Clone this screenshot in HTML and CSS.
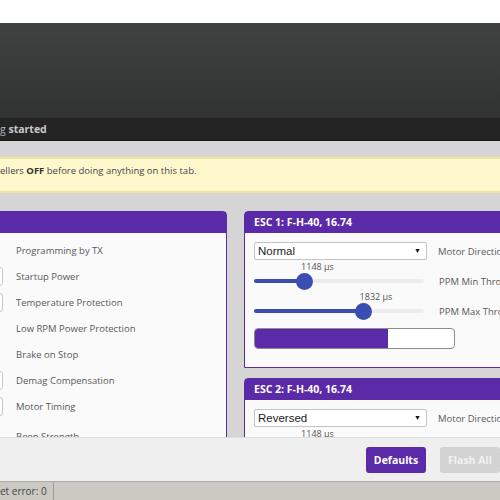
FILE: index.html
```html
<!DOCTYPE html>
<html>
<head>
    <title>ESC Setup</title>
    <link rel="stylesheet" href="styles.css">
</head>
<body>
    <div class="app">
        <div class="topspace"></div>
        <div class="header"></div>
        <div class="log">g <b>started</b></div>

        <div class="content">
            <div class="note">ellers <b>OFF</b> before doing anything on this tab.</div>

            <div class="columns">
                <div class="panel common">
                    <div class="panel-head"></div>
                    <div class="panel-body">
                        <div class="row"><span class="field none"></span><span class="label">Programming by TX</span></div>
                        <div class="row"><span class="field"></span><span class="label">Startup Power</span></div>
                        <div class="row"><span class="field"></span><span class="label">Temperature Protection</span></div>
                        <div class="row"><span class="field none"></span><span class="label">Low RPM Power Protection</span></div>
                        <div class="row"><span class="field none"></span><span class="label">Brake on Stop</span></div>
                        <div class="row"><span class="field"></span><span class="label">Demag Compensation</span></div>
                        <div class="row"><span class="field"></span><span class="label">Motor Timing</span></div>
                        <div class="row spaced"><span class="field none"></span><span class="label">Beep Strength</span></div>
                    </div>
                </div>

                <div class="escs">
                    <div class="panel esc">
                        <div class="panel-head">ESC 1: F-H-40, 16.74</div>
                        <div class="panel-body">
                            <div class="line">
                                <div class="select">Normal<span class="arrow">&#9660;</span></div>
                                <span class="label">Motor Direction</span>
                            </div>
                            <div class="line slider-line">
                                <div class="slider">
                                    <div class="value" style="width: 127px">1148 µs</div>
                                    <div class="track">
                                        <div class="fill" style="width: 50px"></div>
                                        <div class="thumb"></div>
                                    </div>
                                </div>
                                <span class="label">PPM Min Throttle</span>
                            </div>
                            <div class="line slider-line">
                                <div class="slider">
                                    <div class="value" style="width: 244px">1832 µs</div>
                                    <div class="track">
                                        <div class="fill" style="width: 109px"></div>
                                        <div class="thumb"></div>
                                    </div>
                                </div>
                                <span class="label">PPM Max Throttle</span>
                            </div>
                            <div class="progress"><div class="progress-fill" style="width: 133px"></div></div>
                        </div>
                    </div>

                    <div class="panel esc">
                        <div class="panel-head">ESC 2: F-H-40, 16.74</div>
                        <div class="panel-body">
                            <div class="line">
                                <div class="select">Reversed<span class="arrow">&#9660;</span></div>
                                <span class="label">Motor Direction</span>
                            </div>
                            <div class="line slider-line">
                                <div class="slider">
                                    <div class="value" style="width: 127px">1148 µs</div>
                                    <div class="track">
                                        <div class="fill" style="width: 50px"></div>
                                        <div class="thumb"></div>
                                    </div>
                                </div>
                                <span class="label">PPM Min Throttle</span>
                            </div>
                        </div>
                    </div>
                </div>
            </div>
        </div>

        <div class="toolbar">
            <a class="btn">Defaults</a>
            <a class="btn disabled">Flash All</a>
        </div>
        <div class="status">
            <span class="status-item">et error: 0</span>
        </div>
    </div>
</body>
</html>
```

FILE: styles.css
```css
body {
    margin: 0;
    font-family: "Open Sans", "DejaVu Sans", sans-serif;
    font-size: 9.5px;
    color: #555;
    background: #fff;
}
.app {
    width: 500px;
    height: 500px;
    overflow: hidden;
    display: flex;
    flex-direction: column;
}
.topspace {
    height: 23px;
    flex: none;
}
.header {
    height: 95px;
    flex: none;
    background: linear-gradient(#3f4241, #313332);
}
.log {
    height: 23px;
    flex: none;
    line-height: 23px;
    background: #242424;
    color: #b4b4b4;
    font-size: 10.5px;
    border-bottom: 1px solid #1b1b1b;
    box-sizing: border-box;
}
.log b {
    color: #c8c8c8;
}
.content {
    height: 296px;
    flex: none;
    overflow: hidden;
    background: #d5d5d5;
    padding-top: 16px;
    box-sizing: border-box;
}
.note {
    height: 36px;
    box-sizing: border-box;
    padding-top: 5px;
    background: #fff8cd;
    border-top: 2px solid #f2e3a2;
    border-bottom: 2px solid #f2e3a2;
    color: #474747;
}
.note b {
    color: #333;
}
.columns {
    display: flex;
    gap: 17px;
    margin-top: 18px;
    margin-left: -60px;
}
.panel {
    border: 1px solid #5b2aa8;
    border-radius: 4px 4px 0 0;
    background: #fafafa;
    flex: none;
}
.panel-head {
    height: 21px;
    line-height: 20px;
    background: #5b2aa8;
    color: #fff;
    font-weight: bold;
    font-size: 10.5px;
    padding-left: 9px;
}
.common {
    width: 285px;
}
.common .panel-body {
    padding-top: 4px;
}
.row {
    display: flex;
    align-items: center;
    height: 26px;
    padding-left: 10px;
    gap: 13px;
}
.row.spaced {
    margin-top: 4px;
}
.field {
    width: 52px;
    height: 19px;
    box-sizing: border-box;
    border: 1px solid #c8c8c8;
    border-radius: 3px;
    background: #fff;
}
.field.none {
    border: none;
    background: none;
}
.row .label {
    color: #595959;
}
.escs {
    display: flex;
    flex-direction: column;
    gap: 10px;
    width: 290px;
    flex: none;
}
.esc .panel-body {
    padding: 9px 9px 18px 9px;
}
.line {
    display: flex;
    align-items: center;
    gap: 11px;
}
.line .label {
    white-space: nowrap;
    color: #595959;
}
.select {
    width: 173px;
    height: 18px;
    box-sizing: border-box;
    border: 1px solid #c4c4c4;
    border-radius: 2px;
    background: #fff;
    font-family: "Liberation Sans", Arial, sans-serif;
    font-size: 11.5px;
    color: #222;
    line-height: 16px;
    padding-left: 3px;
    display: flex;
    justify-content: space-between;
}
.arrow {
    font-size: 7px;
    color: #111;
    padding-right: 5px;
}
.slider-line {
    align-items: flex-end;
    gap: 15px;
}
.slider {
    width: 170px;
    height: 30px;
    display: flex;
    flex-direction: column;
}
.value {
    height: 13px;
    line-height: 13px;
    text-align: center;
    font-size: 9px;
    color: #555;
    white-space: nowrap;
}
.track {
    height: 4px;
    margin-top: 6px;
    background: #ececec;
    border-radius: 2px;
    display: flex;
    align-items: center;
}
.fill {
    height: 4px;
    background: #3a4db0;
    border-radius: 2px 0 0 2px;
}
.thumb {
    width: 17px;
    height: 17px;
    margin-left: -8px;
    border-radius: 50%;
    background: #3a4db0;
    flex: none;
}
.slider-line .label {
    height: 16px;
    line-height: 16px;
}
.progress {
    margin-top: 8px;
    width: 201px;
    height: 21px;
    box-sizing: border-box;
    border: 1px solid #8c8c8c;
    border-radius: 4px;
    background: #fff;
    overflow: hidden;
}
.progress-fill {
    height: 100%;
    background: #5b2aa8;
}
.toolbar {
    height: 44px;
    flex: none;
    box-sizing: border-box;
    width: 520px;
    background: #efefef;
    border-top: 1px solid #dedede;
    display: flex;
    justify-content: flex-end;
    align-items: center;
    gap: 14px;
    padding-right: 20px;
}
.btn {
    width: 60px;
    height: 26px;
    line-height: 26px;
    text-align: center;
    background: #5b2aa8;
    color: #fff;
    font-weight: bold;
    font-size: 10.5px;
    border-radius: 3px;
    text-decoration: none;
}
.btn.disabled {
    background: #d3d3d3;
    color: #f2f2f2;
}
.status {
    height: 19px;
    flex: none;
    box-sizing: border-box;
    background: #cacac3;
    border-top: 1px solid #aaa;
    display: flex;
}
.status-item {
    width: 53px;
    line-height: 18px;
    border-right: 1px solid #9e9e98;
    color: #444;
    font-size: 10px;
}
```
